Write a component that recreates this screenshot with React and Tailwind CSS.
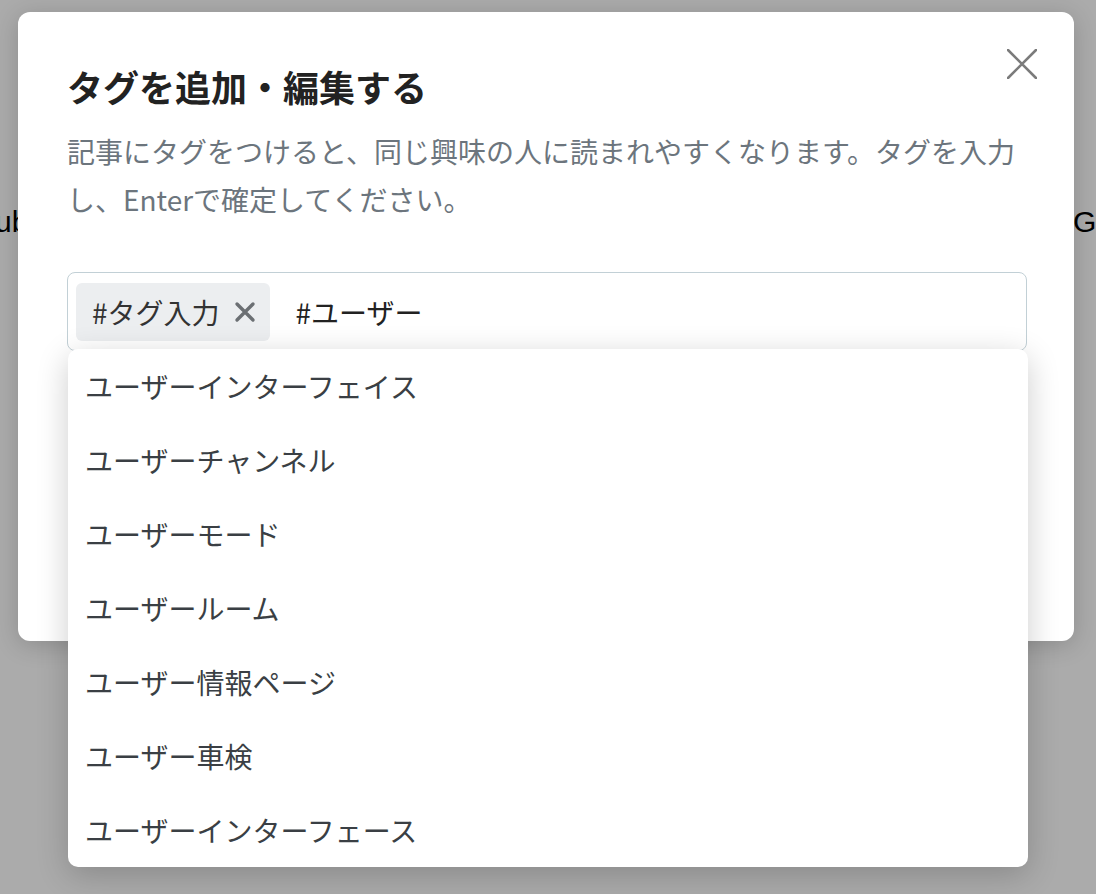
import React from 'react';

const suggestions = [
    'ユーザーインターフェイス',
    'ユーザーチャンネル',
    'ユーザーモード',
    'ユーザールーム',
    'ユーザー情報ページ',
    'ユーザー車検',
    'ユーザーインターフェース',
];

const jp = { fontFamily: '"Noto Sans CJK JP", "Noto Sans", sans-serif' };

const App = () => {
    return (
        <div className="relative w-full h-[894px] bg-[#ababab] overflow-hidden" style={jp}>
            {/* page behind the overlay */}
            <div
                className="flex whitespace-nowrap pt-[202px] text-[30px] leading-[40px] text-black"
                style={{ fontFamily: '"Liberation Sans", Arial, sans-serif' }}
            >
                <div className="w-[1073px] shrink-0 pl-[2px]">
                    <span className="-ml-[7px] inline-block">ub</span>
                </div>
                <span>G</span>
            </div>

            {/* modal */}
            <div className="absolute left-[18px] top-[12px] w-[1056px] h-[629px] bg-white rounded-[12px] shadow-[0_4px_24px_rgba(0,0,0,0.18)] pl-[49px] pt-[47px]">
                <button className="absolute top-[37px] right-[37px] w-[30px] h-[30px]">
                    <svg viewBox="0 0 30 30" className="w-[30px] h-[30px]">
                        <path d="M1 1L29 29M29 1L1 29" stroke="#7b7b7b" strokeWidth="2.6" strokeLinecap="round" />
                    </svg>
                </button>

                <h2 className="text-[36px] leading-[54px] font-bold text-[#222]">タグを追加・編集する</h2>
                <p className="mt-[14px] w-[960px] text-[28px] leading-[48px] text-[#6c757d]">
                    記事にタグをつけると、同じ興味の人に読まれやすくなります。タグを入力し、Enterで確定してください。
                </p>

                <div className="relative mt-[49px] w-[960px]">
                    <div className="h-[79px] border border-[#c2d0d6] rounded-[8px] flex items-center pl-[8px]">
                        <div className="h-[58px] flex items-center gap-[14px] pl-[16px] pr-[14px] bg-[#eceef0] rounded-[6px]">
                            <span className="text-[28px] leading-[40px] text-[#333]">#タグ入力</span>
                            <svg viewBox="0 0 22 22" className="w-[22px] h-[22px]">
                                <path d="M3 3L19 19M19 3L3 19" stroke="#6b6f73" strokeWidth="3.4" strokeLinecap="round" />
                            </svg>
                        </div>
                        <span className="ml-[26px] text-[28px] leading-[40px] text-[#222]">#ユーザー</span>
                    </div>

                    {/* suggestion list */}
                    <ul className="absolute left-[1px] top-[77px] w-[960px] bg-white rounded-[10px] shadow-[0_8px_32px_rgba(0,0,0,0.2)] overflow-hidden">
                        {suggestions.map(s => (
                            <li key={s} className="h-[74px] flex items-center pl-[17px] text-[28px] leading-[40px] text-[#3a3f44]">
                                {s}
                            </li>
                        ))}
                    </ul>
                </div>
            </div>
        </div>
    );
};

export default App;
